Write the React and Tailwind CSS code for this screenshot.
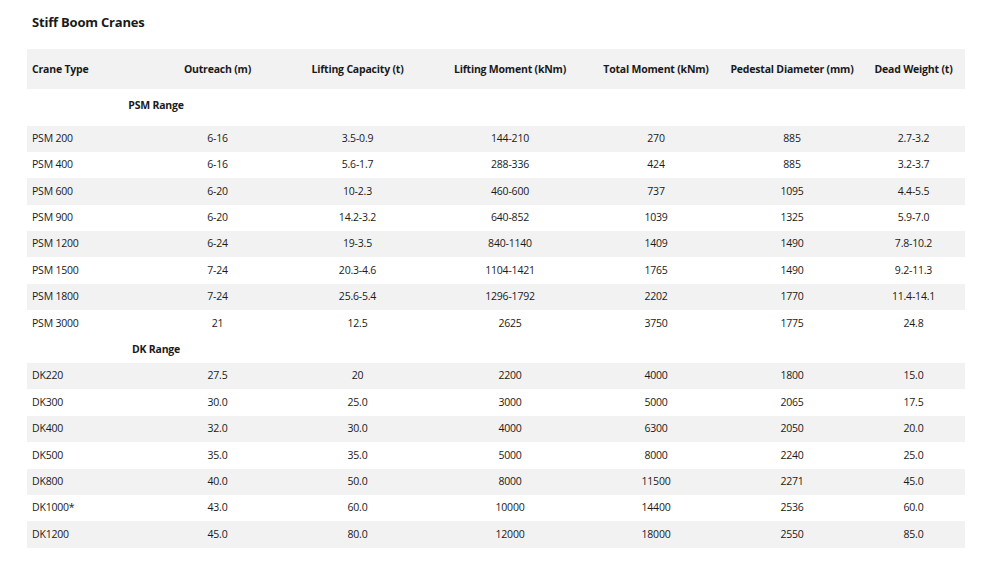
import React from 'react';

const psm = [
  ['PSM 200', '6-16', '3.5-0.9', '144-210', '270', '885', '2.7-3.2'],
  ['PSM 400', '6-16', '5.6-1.7', '288-336', '424', '885', '3.2-3.7'],
  ['PSM 600', '6-20', '10-2.3', '460-600', '737', '1095', '4.4-5.5'],
  ['PSM 900', '6-20', '14.2-3.2', '640-852', '1039', '1325', '5.9-7.0'],
  ['PSM 1200', '6-24', '19-3.5', '840-1140', '1409', '1490', '7.8-10.2'],
  ['PSM 1500', '7-24', '20.3-4.6', '1104-1421', '1765', '1490', '9.2-11.3'],
  ['PSM 1800', '7-24', '25.6-5.4', '1296-1792', '2202', '1770', '11.4-14.1'],
  ['PSM 3000', '21', '12.5', '2625', '3750', '1775', '24.8'],
];

const dk = [
  ['DK220', '27.5', '20', '2200', '4000', '1800', '15.0'],
  ['DK300', '30.0', '25.0', '3000', '5000', '2065', '17.5'],
  ['DK400', '32.0', '30.0', '4000', '6300', '2050', '20.0'],
  ['DK500', '35.0', '35.0', '5000', '8000', '2240', '25.0'],
  ['DK800', '40.0', '50.0', '8000', '11500', '2271', '45.0'],
  ['DK1000*', '43.0', '60.0', '10000', '14400', '2536', '60.0'],
  ['DK1200', '45.0', '80.0', '12000', '18000', '2550', '85.0'],
];

const headers = ['Crane Type', 'Outreach (m)', 'Lifting Capacity (t)', 'Lifting Moment (kNm)', 'Total Moment (kNm)', 'Pedestal Diameter (mm)', 'Dead Weight (t)'];

const Rows = ({ rows }) =>
  rows.map((r, i) => (
    <tr key={r[0]} className={`h-[26.4px] ${i % 2 === 0 ? 'bg-[#f2f2f2]' : ''}`}>
      {r.map((c, j) => (
        <td key={j} className={j === 0 ? 'pl-[5px] text-left' : 'text-center'}>{c}</td>
      ))}
    </tr>
  ));

export default function App() {
  return (
    <div className="bg-white w-[999px] h-[567px] px-[27px] pt-[13px] text-[#1a1a1a] tracking-[-0.2px]" style={{ fontFamily: '"Open Sans", "Liberation Sans", sans-serif' }}>
      <h1 className="text-[13px] font-bold pl-[5px] mb-[16px]">Stiff Boom Cranes</h1>
      <table className="table-fixed border-collapse w-[938px] text-[10.5px]">
        <colgroup>
          <col className="w-[123px]" /><col className="w-[135px]" /><col className="w-[145px]" /><col className="w-[160px]" />
          <col className="w-[132px]" /><col className="w-[140px]" /><col className="w-[103px]" />
        </colgroup>
        <thead>
          <tr className="h-[40px] bg-[#f2f2f2] font-bold">
            {headers.map((h, j) => (
              <th key={h} className={`pt-[2px] ${j === 0 ? 'pl-[5px] text-left' : 'text-center'}`}>{h}</th>
            ))}
          </tr>
        </thead>
        <tbody>
          <tr className="h-[37px]">
            <td colSpan={2} className="text-center font-bold pb-[2px]">PSM Range</td>
            <td colSpan={5} />
          </tr>
          <Rows rows={psm} />
          <tr className="h-[26.4px]">
            <td colSpan={2} className="text-center font-bold">DK Range</td>
            <td colSpan={5} />
          </tr>
          <Rows rows={dk} />
        </tbody>
      </table>
    </div>
  );
}
